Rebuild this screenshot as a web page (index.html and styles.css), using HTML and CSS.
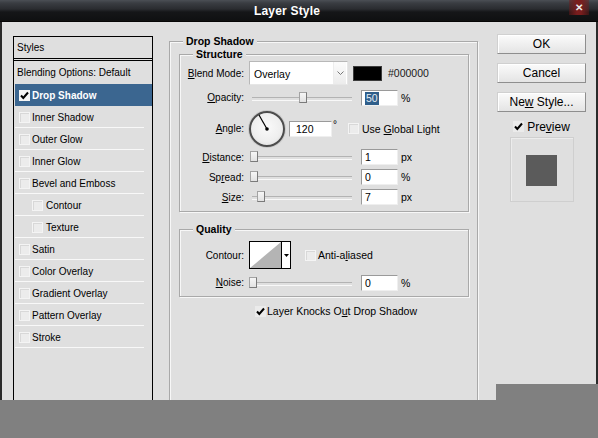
FILE: index.html
```html
<!DOCTYPE html>
<html>
<head>
<meta charset="utf-8">
<title>Layer Style</title>
<link rel="stylesheet" href="styles.css">
</head>
<body>
<div class="window">
  <div class="titlebar">
    <span class="title">Layer Style</span>
    <span class="close">✕</span>
  </div>
  <div class="content">
    <div class="styles-panel">
      <div class="sp-head">Styles</div>
      <div class="sp-row sp-blend">Blending Options: Default</div>
      <div class="sp-row active"><span class="cb checked"><svg viewBox="0 0 11 11" width="11" height="11"><path d="M2 5.5 L4.3 8 L9 2.5" fill="none" stroke="#000" stroke-width="2"/></svg></span>Drop Shadow</div>
      <div class="sp-row"><span class="cb"></span>Inner Shadow</div>
      <div class="sp-row"><span class="cb"></span>Outer Glow</div>
      <div class="sp-row"><span class="cb"></span>Inner Glow</div>
      <div class="sp-row"><span class="cb"></span>Bevel and Emboss</div>
      <div class="sp-row sub-item"><span class="cb"></span>Contour</div>
      <div class="sp-row sub-item"><span class="cb"></span>Texture</div>
      <div class="sp-row"><span class="cb"></span>Satin</div>
      <div class="sp-row"><span class="cb"></span>Color Overlay</div>
      <div class="sp-row"><span class="cb"></span>Gradient Overlay</div>
      <div class="sp-row"><span class="cb"></span>Pattern Overlay</div>
      <div class="sp-row"><span class="cb"></span>Stroke</div>
    </div>

    <fieldset class="group main">
      <legend>Drop Shadow</legend>
      <fieldset class="group sub structure">
        <legend>Structure</legend>
        <div class="row r-blend">
          <span class="lbl"><u>B</u>lend Mode:</span>
          <div class="select"><span class="sel-text">Overlay</span><span class="dd"><svg viewBox="0 0 7 4" width="7" height="4"><path d="M0.5 0.5 L3.5 3.5 L6.5 0.5" fill="none" stroke="#777" stroke-width="1"/></svg></span></div>
          <span class="swatch"></span>
          <span class="hex">#000000</span>
        </div>
        <div class="row r-opacity">
          <span class="lbl"><u>O</u>pacity:</span>
          <div class="slider"><span class="thumb" style="left:50px"></span></div>
          <span class="num"><span class="hl">50</span></span>
          <span class="unit">%</span>
        </div>
        <div class="row r-angle">
          <span class="lbl"><u>A</u>ngle:</span>
          <div class="dial"><svg viewBox="0 0 36 36" width="36" height="36"><line x1="18" y1="18" x2="10" y2="4" stroke="#000" stroke-width="1.2"/><circle cx="18" cy="18" r="1.8" fill="#000"/></svg></div>
          <span class="num angle-num">120</span>
          <span class="deg">°</span>
          <span class="cb global"></span>
          <span class="cb-text">Use <u>G</u>lobal Light</span>
        </div>
        <div class="row r-slide">
          <span class="lbl"><u>D</u>istance:</span>
          <div class="slider"><span class="thumb" style="left:1px"></span></div>
          <span class="num">1</span>
          <span class="unit">px</span>
        </div>
        <div class="row r-slide">
          <span class="lbl">Sp<u>r</u>ead:</span>
          <div class="slider"><span class="thumb" style="left:1px"></span></div>
          <span class="num">0</span>
          <span class="unit">%</span>
        </div>
        <div class="row r-slide">
          <span class="lbl"><u>S</u>ize:</span>
          <div class="slider"><span class="thumb" style="left:8px"></span></div>
          <span class="num">7</span>
          <span class="unit">px</span>
        </div>
      </fieldset>

      <fieldset class="group sub quality">
        <legend>Quality</legend>
        <div class="row r-contour">
          <span class="lbl">Contour:</span>
          <div class="contour">
            <span class="curve"><svg viewBox="0 0 31 26" width="31" height="26" preserveAspectRatio="none"><polygon points="0,26 31,0 31,26" fill="#b4b4b4"/></svg></span>
            <span class="cdd"><svg viewBox="0 0 5 3" width="5" height="3"><polygon points="0,0 5,0 2.5,3" fill="#000"/></svg></span>
          </div>
          <span class="cb anti"></span>
          <span class="cb-text">Anti-a<u>l</u>iased</span>
        </div>
        <div class="row r-noise">
          <span class="lbl"><u>N</u>oise:</span>
          <div class="slider"><span class="thumb" style="left:0px"></span></div>
          <span class="num">0</span>
          <span class="unit">%</span>
        </div>
      </fieldset>

      <div class="row knock">
        <span class="cb checked plain"><svg viewBox="0 0 11 11" width="11" height="11"><path d="M2 5.5 L4.3 8 L9 2.5" fill="none" stroke="#000" stroke-width="2"/></svg></span>
        <span class="cb-text">Layer Knocks O<u>u</u>t Drop Shadow</span>
      </div>
    </fieldset>

    <div class="side">
      <div class="btn"><span>OK</span></div>
      <div class="btn"><span>Cancel</span></div>
      <div class="btn"><span>Ne<u>w</u> Style...</span></div>
      <div class="preview-row">
        <span class="cb checked plain"><svg viewBox="0 0 11 11" width="11" height="11"><path d="M2 5.5 L4.3 8 L9 2.5" fill="none" stroke="#000" stroke-width="2"/></svg></span>
        <span class="pv-text">Pre<u>v</u>iew</span>
      </div>
      <div class="preview-box"><span class="preview-square"></span></div>
    </div>
  </div>
</div>
<div class="notch"></div>
</body>
</html>
```
FILE: styles.css
```css
* { box-sizing: border-box; }
html, body { margin: 0; padding: 0; }
body {
  width: 598px;
  height: 438px;
  background: #808080;
  font-family: "Liberation Sans", Arial, sans-serif;
  font-size: 10px;
  color: #000;
  position: relative;
  overflow: hidden;
}
u { text-decoration: underline; text-underline-offset: 1px; }

.window {
  height: 400px;
  background: #dfdfdf;
  display: flex;
  flex-direction: column;
  overflow: hidden;
}

.titlebar {
  height: 22px;
  flex: none;
  position: relative;
  display: flex;
  align-items: center;
  justify-content: center;
  padding-right: 24px;
  background: linear-gradient(#4b4f55 0, #3a3d42 3px, #2a2c30 9px, #151618 12px, #0f1011 100%);
  border-bottom: 1px solid #060606;
}
.title {
  color: #fff;
  font-weight: bold;
  font-size: 12px;
  letter-spacing: 0.2px;
}
.close {
  position: absolute;
  right: 9px;
  top: 0;
  width: 20px;
  height: 15px;
  background: linear-gradient(90deg, rgba(110,24,24,0.4), #7a1d1d 40%, #7a1d1d 60%, rgba(110,24,24,0.4));
  color: #e8e8e8;
  font-size: 10px;
  font-weight: bold;
  display: flex;
  align-items: center;
  justify-content: center;
}

.content {
  flex: 1;
  display: flex;
  align-items: flex-start;
  padding: 12px 0 0 11px;
  border-left: 2px solid #2a2a2a;
  border-right: 2px solid #2a2a2a;
}

/* left styles list */
.styles-panel {
  width: 140px;
  height: 380px;
  margin-top: 2px;
  border: 1px solid #000;
  border-bottom: none;
  flex: none;
}
.sp-head {
  height: 24px;
  padding: 0 0 0 3px;
  display: flex;
  align-items: center;
  border-bottom: 3px double #000;
}
.sp-row {
  height: 22px;
  display: flex;
  align-items: center;
  padding-left: 5px;
  background: linear-gradient(#f8f8f8, #f8f8f8) no-repeat 1px 100% / 129px 1px;
  white-space: nowrap;
}
.sp-row.sp-blend {
  height: 23px;
  padding-left: 3px;
  background: none;
}
.sp-row.sub-item { padding-left: 18px; }
.sp-row.sub-item .cb { margin-right: 3px; }
.sp-row.active {
  background: #3b6690;
  color: #fff;
  font-weight: bold;
  margin-left: 1px;
  padding-left: 4px;
}
.cb {
  width: 11px;
  height: 11px;
  flex: none;
  background: #ececec;
  border: 1px solid #f4f4f4;
  box-shadow: inset 1px 1px 0 #d8d8d8;
  margin-right: 2px;
  display: inline-flex;
}
.cb.checked {
  background: #f4f4f4;
  box-shadow: none;
  border: none;
}
.cb.checked.plain { background: #ebebeb; }
.cb svg { display: block; }

/* fieldsets */
fieldset.group {
  margin: 0;
  padding: 0;
  min-width: 0;
  border: 1px solid #a9a9a9;
  box-shadow: inset 1px 1px 0 #f7f7f7, 1px 1px 0 #f7f7f7;
}
fieldset.group > legend {
  font-weight: bold;
  font-size: 10.5px;
  line-height: 13px;
  padding: 0 3px;
  background: #dfdfdf;
}
fieldset.group.main {
  width: 309px;
  height: 380px;
  margin: 1px 0 0 16px;
  padding: 0 8px 0 9px;
  flex: none;
}
fieldset.group.main > legend { margin-left: 4px; }
fieldset.group.sub { width: 290px; }
fieldset.group.sub > legend { margin-left: 13px; }

fieldset.group.structure { padding: 0 0 4px 0; }
fieldset.group.quality { margin-top: 11px; padding: 0 0 5px 0; }

.row {
  display: flex;
  align-items: center;
  white-space: nowrap;
}
.lbl {
  width: 64px;
  flex: none;
  text-align: right;
  margin-right: 5px;
}
.r-blend { height: 24px; margin-top: 0; }
.r-opacity { height: 17px; margin-top: 4px; }
.r-angle { height: 37px; margin-top: 4px; }
.r-slide { height: 20px; }
.r-contour { height: 28px; margin-top: 5px; }
.r-noise { height: 17px; margin-top: 5px; }

.select {
  width: 99px;
  height: 24px;
  background: #fff;
  border: 1px solid;
  border-color: #b8b8b8 #e6e6e6 #e6e6e6 #b8b8b8;
  display: flex;
  align-items: center;
  justify-content: space-between;
  padding-left: 4px;
}
.sel-text { font-size: 10.5px; padding-top: 2px; }
.dd {
  width: 13px;
  height: 22px;
  margin-right: 1px;
  border-left: 1px solid #ededed;
  background: linear-gradient(#fbfbfb, #ececec);
  display: flex;
  align-items: center;
  justify-content: center;
}
.swatch {
  width: 29px;
  height: 15px;
  margin-left: 5px;
  background: #000;
  border: 1px solid #3c3c3c;
}
.hex { margin-left: 6px; color: #1a1a1a; font-size: 10.5px; }

.slider {
  width: 103px;
  height: 14px;
  position: relative;
  flex: none;
}
.slider::before {
  content: "";
  position: absolute;
  left: 3px;
  right: 0;
  top: 6px;
  height: 2px;
  border-top: 1px solid #b3b3b3;
  border-bottom: 1px solid #f8f8f8;
}
.thumb {
  position: absolute;
  top: 1px;
  width: 8px;
  height: 11px;
  background: linear-gradient(#f6f6f6, #e2e2e2);
  border: 1px solid #a3a3a3;
  border-right-color: #7a7a7a;
  border-bottom-color: #7a7a7a;
}
.num {
  width: 37px;
  height: 16px;
  margin-left: 9px;
  flex: none;
  background: #fff;
  border: 1px solid;
  border-color: #9a9a9a #efefef #efefef #9a9a9a;
  padding-left: 3px;
  line-height: 14px;
  font-size: 10.5px;
}
.hl {
  display: inline-block;
  background: #2f5e8a;
  color: #e6eef6;
  padding: 0 1px;
  line-height: 13px;
}
.unit { margin-left: 3px; font-size: 10.5px; }

.dial {
  width: 36px;
  height: 36px;
  flex: none;
  border-radius: 50%;
  border: 2px solid #4c4c4c;
  background: radial-gradient(circle at 50% 45%, #fafafa 0, #eeeeee 60%, #d6d6d6 100%);
  box-shadow: 0 0 0 1px #c9c9c9;
}
.dial svg { display: block; margin: -2px; }
.angle-num {
  width: 43px;
  margin-left: 4px;
  padding-left: 6px;
}
.deg { margin-left: 1px; align-self: flex-start; margin-top: 9px; font-size: 10px; }
.cb.global { margin-left: 11px; margin-right: 3px; }
.cb.anti { margin-left: 14px; margin-right: 2px; }
.cb-text { font-size: 10.5px; }

.contour {
  width: 42px;
  height: 28px;
  display: flex;
  border: 1px solid #000;
  background: #fff;
  flex: none;
}
.curve {
  width: 31px;
  height: 26px;
  display: block;
}
.curve svg { display: block; }
.cdd {
  width: 9px;
  border-left: 1px solid #000;
  display: flex;
  align-items: center;
  justify-content: center;
}

.knock {
  margin-top: 7px;
  height: 14px;
  padding-left: 76px;
}
.knock .cb { margin-right: 1px; }

/* right side */
.side {
  width: 89px;
  margin-left: 19px;
  flex: none;
  display: flex;
  flex-direction: column;
  align-items: center;
}
.btn {
  width: 89px;
  height: 20px;
  margin-bottom: 9px;
  display: flex;
  align-items: center;
  justify-content: center;
  font-size: 12px;
  background: linear-gradient(#fbfbfb, #e4e4e4);
  border: 1px solid;
  border-color: #d0d0d0 #8e8e8e #8e8e8e #d0d0d0;
  box-shadow: inset 1px 1px 0 #fff;
}
.preview-row {
  margin-top: -1px;
  height: 13px;
  display: flex;
  align-items: center;
  margin-left: 0;
}
.preview-row .cb { margin-right: 3px; }
.pv-text { font-size: 12px; }
.preview-box {
  margin-top: 4px;
  width: 64px;
  height: 65px;
  border: 1px solid #cfcfcf;
  box-shadow: inset 1px 1px 0 #ececec;
  display: flex;
  align-items: center;
  justify-content: center;
  padding-top: 2px;
}
.preview-square {
  width: 31px;
  height: 31px;
  background: #5b5b5b;
}

.notch {
  position: absolute;
  right: 0;
  top: 384px;
  width: 102px;
  height: 16px;
  background: #808080;
}
```
